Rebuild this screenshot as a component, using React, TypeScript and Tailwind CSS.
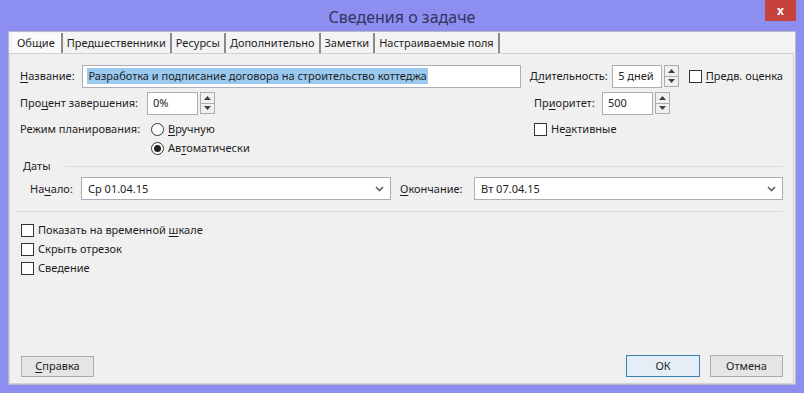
import React from "react";

const U = ({ children }: { children: React.ReactNode }) => <span className="underline underline-offset-2">{children}</span>;

const Spinner = () => (
  <div className="flex flex-col w-[15px] h-[22px] border border-[#acacac] bg-[#f0f0f0]">
    <div className="flex-1 flex items-center justify-center border-b border-[#acacac]">
      <svg width="7" height="4" viewBox="0 0 7 4"><path d="M0 4 L3.5 0 L7 4 Z" fill="#404040" /></svg>
    </div>
    <div className="flex-1 flex items-center justify-center">
      <svg width="7" height="4" viewBox="0 0 7 4"><path d="M0 0 L3.5 4 L7 0 Z" fill="#404040" /></svg>
    </div>
  </div>
);

const Check = ({ children }: { children: React.ReactNode }) => (
  <div className="flex items-center gap-[4px] h-[16px]">
    <div className="w-[13px] h-[13px] border border-[#333] bg-white" />
    <span>{children}</span>
  </div>
);

const Radio = ({ on, children }: { on?: boolean; children: React.ReactNode }) => (
  <div className="flex items-center gap-[4px] h-[16px]">
    <div className="w-[13px] h-[13px] rounded-full border border-[#333] bg-white flex items-center justify-center">
      {on && <div className="w-[7px] h-[7px] rounded-full bg-[#222]" />}
    </div>
    <span>{children}</span>
  </div>
);

const Combo = ({ value, w }: { value: string; w: string }) => (
  <div className={`${w} h-[23px] border border-[#abadb3] bg-white flex items-center justify-between pl-[6px] pr-[6px]`}>
    <span>{value}</span>
    <svg width="9" height="6" viewBox="0 0 9 6"><path d="M1 1 L4.5 4.5 L8 1" stroke="#606060" strokeWidth="1.6" fill="none" /></svg>
  </div>
);

const tabs = ["Общие", "Предшественники", "Ресурсы", "Дополнительно", "Заметки", "Настраиваемые поля"];

export default function App() {
  return (
    <div
      className="w-[804px] h-[393px] bg-[#8c8ef0] flex flex-col text-[11px] leading-[16px] text-[#1e1e1e] whitespace-nowrap"
      style={{ fontFamily: '"Noto Sans", "Open Sans", sans-serif' }}
    >
      {/* title bar */}
      <div className="h-[31px] flex items-center relative shrink-0">
        <div className="flex-1 text-center text-[16px] leading-[20px] text-[#33335f] pt-[2px]">Сведения о задаче</div>
        <div className="absolute right-[8px] top-0 w-[31px] h-[21px] bg-[#c7423a] text-white flex items-center justify-center text-[12px] font-bold">
          x
        </div>
      </div>

      <div className="mx-[8px] mb-[8px] flex-1 bg-[#f0f0f0] border border-[#b9b9c9] flex flex-col">
        {/* tabs */}
        <div className="flex items-end h-[21px] pl-[3px] bg-[#f3f3f3]">
          {tabs.map((t, i) => (
            <div
              key={t}
              className={`h-[20px] px-[4px] flex items-center border-r-2 border-[#8a8a8a] ${i === 0 ? "bg-[#fafafa] pl-[5px] pr-[6px]" : ""}`}
            >
              {t}
            </div>
          ))}
        </div>

        <div className="flex-1 border border-[#d2d2d2] mr-[1px] flex flex-col px-[10px] pt-[11px]">
          <div className="flex items-center h-[22px]">
            <span className="w-[63px]"><U>Н</U>азвание:</span>
            <div className="w-[442px] h-[23px] border border-[#abadb3] bg-white flex items-center pl-[4px]">
              <span className="bg-[#99c9ef] px-[1px]">Разработка и подписание договора на строительство коттеджа</span>
            </div>
            <span className="ml-[9px] w-[83px]">Д<U>л</U>ительность:</span>
            <div className="w-[50px] h-[23px] border border-[#abadb3] bg-white flex items-center pl-[5px]">5 дней</div>
            <div className="ml-[2px]"><Spinner /></div>
            <div className="ml-[10px]"><Check><U>П</U>редв. оценка</Check></div>
          </div>

          <div className="flex mt-[5px]">
            <div className="flex flex-col w-[514px]">
              <div className="flex items-center h-[22px]">
                <span className="w-[127px]">Про<U>ц</U>ент завершения:</span>
                <div className="w-[51px] h-[23px] border border-[#abadb3] bg-white flex items-center pl-[5px]">0%</div>
                <div className="ml-[2px]"><Spinner /></div>
              </div>
              <div className="flex mt-[7px]">
                <span className="w-[131px]">Режим планирования:</span>
                <div className="flex flex-col gap-[3px]">
                  <Radio><U>В</U>ручную</Radio>
                  <Radio on>Ав<U>т</U>оматически</Radio>
                </div>
              </div>
            </div>
            <div className="flex flex-col">
              <div className="flex items-center h-[22px]">
                <span className="w-[68px]">Пр<U>и</U>оритет:</span>
                <div className="w-[51px] h-[23px] border border-[#abadb3] bg-white flex items-center pl-[5px]">500</div>
                <div className="ml-[2px]"><Spinner /></div>
              </div>
              <div className="mt-[7px]"><Check>Не<U>а</U>ктивные</Check></div>
            </div>
          </div>

          {/* Даты */}
          <div className="flex items-center mt-[2px] pl-[3px]">
            <span>Даты</span>
            <div className="flex-1 h-px bg-[#dcdcdc] ml-[14px]" />
          </div>
          <div className="flex items-center mt-[3px] pl-[10px]">
            <span className="w-[51px]">На<U>ч</U>ало:</span>
            <Combo value="Ср 01.04.15" w="w-[310px]" />
            <span className="ml-[9px] w-[74px]"><U>О</U>кончание:</span>
            <Combo value="Вт 07.04.15" w="w-[309px]" />
          </div>
          <div className="h-px bg-[#dcdcdc] mt-[11px] -ml-[4px]" />

          <div className="flex flex-col gap-[3px] mt-[10px] pl-[1px]">
            <Check>Показать на временной <U>ш</U>кале</Check>
            <Check>Скрыть отрезок</Check>
            <Check>Сведение</Check>
          </div>

          <div className="flex-1" />
          <div className="flex items-center mb-[6px] pl-[1px]">
            <div className="w-[73px] h-[21px] border border-[#acacac] bg-[#e5e5e5] flex items-center justify-center"><U>С</U>правка</div>
            <div className="flex-1" />
            <div className="w-[74px] h-[22px] border border-[#3c7fb1] bg-[#e5eef6] flex items-center justify-center">ОК</div>
            <div className="w-[73px] h-[22px] ml-[10px] border border-[#acacac] bg-[#e5e5e5] flex items-center justify-center">Отмена</div>
          </div>
        </div>
      </div>
    </div>
  );
}
